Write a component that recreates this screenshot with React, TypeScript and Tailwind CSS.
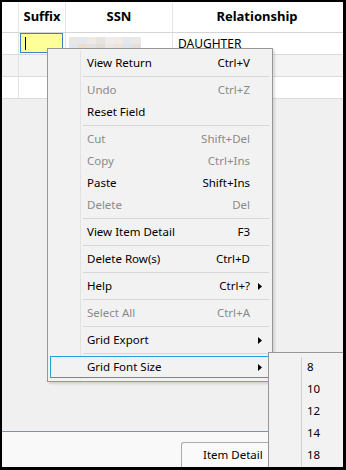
import type { ReactNode } from "react";

type MenuEntry =
  | { kind: "item"; label: string; shortcut?: string; disabled?: boolean; submenu?: boolean; active?: boolean }
  | { kind: "sep" };

const menuEntries: MenuEntry[] = [
  { kind: "item", label: "View Return", shortcut: "Ctrl+V" },
  { kind: "sep" },
  { kind: "item", label: "Undo", shortcut: "Ctrl+Z", disabled: true },
  { kind: "item", label: "Reset Field" },
  { kind: "sep" },
  { kind: "item", label: "Cut", shortcut: "Shift+Del", disabled: true },
  { kind: "item", label: "Copy", shortcut: "Ctrl+Ins", disabled: true },
  { kind: "item", label: "Paste", shortcut: "Shift+Ins" },
  { kind: "item", label: "Delete", shortcut: "Del", disabled: true },
  { kind: "sep" },
  { kind: "item", label: "View Item Detail", shortcut: "F3" },
  { kind: "sep" },
  { kind: "item", label: "Delete Row(s)", shortcut: "Ctrl+D" },
  { kind: "sep" },
  { kind: "item", label: "Help", shortcut: "Ctrl+?", submenu: true },
  { kind: "sep" },
  { kind: "item", label: "Select All", shortcut: "Ctrl+A", disabled: true },
  { kind: "sep" },
  { kind: "item", label: "Grid Export", submenu: true },
  { kind: "sep" },
  { kind: "item", label: "Grid Font Size", submenu: true, active: true },
];

const fontSizes = ["8", "10", "12", "14", "18"];

// pale blocks standing in for the blurred SSN
const ssnBlocks = [
  ["#ebe6e1", "#e3e7ef", "#eee9e3", "#e7e3e0", "#efecea", "#f1ebe5", "#e5e7ef", "#eae8e5"],
  ["#dfe7f2", "#f0dcc8", "#e4e1e4", "#e1ddd4", "#ebe7e5", "#eee3db", "#dfe3ec", "#e6dfd7"],
];

export default function App() {
  return (
    <div
      className="relative flex h-[470px] w-[346px] flex-col overflow-hidden border-t-2 border-l-2 border-r-[3px] border-b-[3px] border-black bg-[#f0f0f0] text-[12px] text-black"
      style={{ fontFamily: '"Segoe UI", "Noto Sans", "Open Sans", sans-serif' }}
    >
      <div className="flex h-[31px] shrink-0 border-b border-[#d5d5d5] bg-white text-[13px] font-bold">
        <HeaderCell width="w-[17px]" />
        <HeaderCell width="w-[47px]">Suffix</HeaderCell>
        <HeaderCell width="w-[107px]">SSN</HeaderCell>
        <div className="flex flex-1 items-center justify-center pr-[2px]">Relationship</div>
      </div>

      <GridRow bg="bg-white">
        <div className="flex h-full w-[47px] border-r border-[#e3e3e3] p-[0_2px_1px_1px]">
          <div className="flex h-full w-full items-center border border-[#3a7fd0] bg-[#ffff99] pl-[4px]">
            <div className="h-[13px] w-px bg-black" />
          </div>
        </div>
        <div className="flex h-full w-[107px] items-center border-r border-[#e3e3e3] pl-[3px]">
          <div className="flex flex-col">
            {ssnBlocks.map((row, i) => (
              <div key={i} className="flex">
                {row.map((color, j) => (
                  <div key={j} className="h-[7px] w-[9px]" style={{ background: color }} />
                ))}
              </div>
            ))}
          </div>
        </div>
        <div className="flex flex-1 items-center pl-[5px]">DAUGHTER</div>
      </GridRow>
      <GridRow bg="bg-[#f4f4f4]" />
      <GridRow bg="bg-white" />

      <div className="flex-1" />

      <div className="flex h-[36px] shrink-0 items-end border-t border-[#7d8fad] bg-[#f9f9f9] pl-[179px]">
        <div className="flex h-[25px] w-[100px] items-center rounded-tl-[3px] border-l border-t border-[#acacac] bg-[#fafafa] pl-[21px] text-[11.5px]">
          Item Detail
        </div>
      </div>

      <ContextMenu />
      <FontSizeMenu />
    </div>
  );
}

function HeaderCell({ width, children }: { width: string; children?: ReactNode }) {
  return (
    <div className={`flex h-full ${width} items-center justify-center border-r border-[#e5e5e5]`}>
      {children}
    </div>
  );
}

function GridRow({ bg, children }: { bg: string; children?: ReactNode }) {
  return (
    <div className={`flex h-[22px] shrink-0 border-b border-[#dadada] ${bg}`}>
      <div className="h-full w-[17px] border-r border-[#e3e3e3]" />
      {children ?? (
        <>
          <div className="h-full w-[47px] border-r border-[#e3e3e3]" />
          <div className="h-full w-[107px] border-r border-[#e3e3e3]" />
          <div className="flex-1" />
        </>
      )}
    </div>
  );
}

function ContextMenu() {
  return (
    <div className="absolute left-[45px] top-[46px] w-[226px] border border-[#979797] bg-[#f2f2f2] px-[2px] py-[3px] text-[11.5px] shadow-[2px_2px_2px_rgba(0,0,0,0.12)]">
      <div className="pointer-events-none absolute bottom-[2px] left-[32px] top-[2px] w-px bg-[#e2e2e2]" />
      {menuEntries.map((entry, i) =>
        entry.kind === "sep" ? (
          <div key={i} className="flex h-[5px] items-center pl-[33px] pr-[1px]">
            <div className="h-px w-full bg-[#d7d7d7]" />
          </div>
        ) : (
          <div
            key={i}
            className={`relative flex h-[22px] items-center border pl-[36px] pr-[19px] ${
              entry.active ? "border-[#26a0da] bg-[#f2f2f2]" : "border-transparent"
            } ${entry.disabled ? "text-[#8a8a8a]" : "text-black"}`}
          >
            <span className="flex-1">{entry.label}</span>
            {entry.shortcut ? <span>{entry.shortcut}</span> : null}
            {entry.submenu ? <Arrow /> : null}
          </div>
        ),
      )}
    </div>
  );
}

function Arrow() {
  return (
    <svg className="absolute right-[7px] top-[7px]" width="4" height="7" viewBox="0 0 4 7">
      <path d="M0 0 L4 3.5 L0 7 Z" fill="#000" />
    </svg>
  );
}

function FontSizeMenu() {
  return (
    <div className="absolute left-[266px] top-[350px] w-[90px] border border-[#979797] bg-[#f2f2f2] py-[3px] pl-[2px] text-[11.5px]">
      <div className="pointer-events-none absolute bottom-[2px] left-[32px] top-[4px] w-px bg-[#d0d0d0]" />
      {fontSizes.map((size) => (
        <div key={size} className="flex h-[22px] items-center pl-[36px]">
          {size}
        </div>
      ))}
    </div>
  );
}
